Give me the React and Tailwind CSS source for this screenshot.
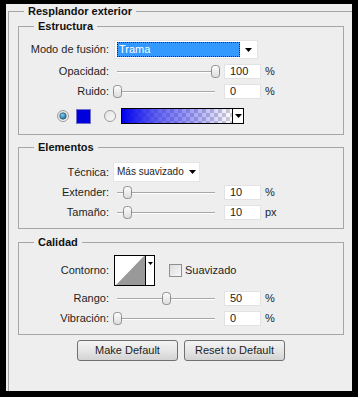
import React from "react";

const font = { fontFamily: '"Liberation Sans", Arial, sans-serif' };

function Thumb() {
    return (
        <svg width="9" height="13" viewBox="0 0 9 13">
            <defs>
                <linearGradient id="th" x1="0" y1="0" x2="0" y2="1">
                    <stop offset="0" stopColor="#fdfdfd" />
                    <stop offset="1" stopColor="#dcdcdc" />
                </linearGradient>
            </defs>
            <rect x="0.5" y="0.5" width="8" height="12" rx="3" fill="url(#th)" stroke="#8d8d8d" />
        </svg>
    );
}

function SliderRow({ label, value, unit }) {
    return (
        <div className="flex items-center h-[15px]">
            <div className="w-[90px] text-right text-[11px] text-[#1e1e1e] leading-none">{label}</div>
            <div className="relative w-[112px] h-[15px]">
                <div className="absolute left-[8px] w-[98px] top-[7px] h-[2px] border-t border-[#a8a8a8] border-b border-b-white"></div>
                <div className="absolute top-[1px]" style={{ left: 4 + value * 0.98 }}>
                    <Thumb />
                </div>
            </div>
            <div className="ml-[3px] w-[37px] h-[15px] bg-white border border-[#e2e2e2] text-[11px] leading-[13px] pl-[5px] text-[#222]">
                {value}
            </div>
            <div className="ml-[4px] text-[11px] text-[#1e1e1e] leading-none">{unit}</div>
        </div>
    );
}

function Arrow() {
    return (
        <svg width="7" height="4" viewBox="0 0 7 4" className="shrink-0">
            <path d="M0 0 H7 L3.5 4 Z" fill="#000" />
        </svg>
    );
}

function Radio({ checked }) {
    return (
        <svg width="12" height="12" viewBox="0 0 12 12">
            <defs>
                <radialGradient id="rb" cx="0.4" cy="0.35" r="0.7">
                    <stop offset="0" stopColor="#7fd4f2" />
                    <stop offset="1" stopColor="#1b5f88" />
                </radialGradient>
                <linearGradient id="rw" x1="0" y1="0" x2="1" y2="1">
                    <stop offset="0" stopColor="#e2e2e2" />
                    <stop offset="1" stopColor="#fbfbfb" />
                </linearGradient>
            </defs>
            <circle cx="6" cy="6" r="5.5" fill="url(#rw)" stroke="#9a9a9a" />
            {checked && <circle cx="6" cy="6" r="3.3" fill="url(#rb)" stroke="#2d4f66" strokeWidth="0.6" />}
        </svg>
    );
}

function GradientPicker() {
    return (
        <div className="flex w-[123px] h-[16px] border border-black bg-white">
            <svg width="110" height="14" viewBox="0 0 110 14" className="block">
                <defs>
                    <pattern id="chk" width="8" height="8" patternUnits="userSpaceOnUse">
                        <rect width="8" height="8" fill="#fff" />
                        <rect width="4" height="4" fill="#cfcfcf" />
                        <rect x="4" y="4" width="4" height="4" fill="#cfcfcf" />
                    </pattern>
                    <linearGradient id="gb" x1="0" y1="0" x2="1" y2="0">
                        <stop offset="0" stopColor="#0000ee" stopOpacity="1" />
                        <stop offset="0.35" stopColor="#2a2aee" stopOpacity="0.7" />
                        <stop offset="1" stopColor="#0000ee" stopOpacity="0" />
                    </linearGradient>
                </defs>
                <rect width="110" height="14" fill="url(#chk)" />
                <rect width="110" height="14" fill="url(#gb)" />
            </svg>
            <div className="flex-1 border-l border-black flex items-center justify-center">
                <Arrow />
            </div>
        </div>
    );
}

function Group({ title, children, className }) {
    return (
        <fieldset className={`ml-[9px] w-[326px] border border-[#a6a6a6] ${className}`}>
            <legend className="ml-[15px] px-[4px] text-[11px] font-bold leading-[14px] text-[#111]">{title}</legend>
            {children}
        </fieldset>
    );
}

function Button({ children }) {
    return (
        <button className="w-[101px] h-[21px] rounded-[3px] border border-[#707070] bg-gradient-to-b from-[#f4f4f4] via-[#e6e6e6] to-[#d3d3d3] text-[11px] text-[#1e1e1e] leading-none">
            {children}
        </button>
    );
}

export default function App() {
    return (
        <div className="w-[358px] h-[397px] bg-black pt-[4px] pl-[6px]" style={font}>
            <div className="w-[346px] h-[387px] bg-[#eeeeee] pl-[2px]">
                <fieldset className="border-l border-t border-[#a6a6a6] h-[387px]">
                    <legend className="ml-[15px] px-[4px] text-[11px] font-bold leading-[14px] text-[#111]">
                        Resplandor exterior
                    </legend>
                    <div className="pt-[1px]">
                        <Group title="Estructura" className="pb-[10px]">
                            <div className="flex items-center mt-[7px] h-[19px]">
                                <div className="w-[90px] text-right text-[11px] text-[#1e1e1e] leading-none">Modo de fusión:</div>
                                <div className="ml-[5px] w-[144px] h-[19px] bg-white border border-[#e3e3e3] flex items-center pl-[2px]">
                                    <div className="w-[123px] h-[15px] bg-[#3399ff] border border-dotted border-[#222] text-white text-[11px] leading-[13px] pl-[1px]">
                                        Trama
                                    </div>
                                    <div className="flex-1 flex justify-center">
                                        <Arrow />
                                    </div>
                                </div>
                            </div>
                            <div className="mt-[5px]">
                                <SliderRow label="Opacidad:" value={100} unit="%" />
                            </div>
                            <div className="mt-[5px]">
                                <SliderRow label="Ruido:" value={0} unit="%" />
                            </div>
                            <div className="flex items-center mt-[9px] h-[16px] pl-[38px]">
                                <Radio checked />
                                <div className="ml-[7px] w-[15px] h-[15px] bg-[#0000dd] border border-[#7070c8]"></div>
                                <div className="ml-[13px] flex">
                                    <Radio />
                                </div>
                                <div className="ml-[5px]">
                                    <GradientPicker />
                                </div>
                            </div>
                        </Group>

                        <Group title="Elementos" className="mt-[5px] pb-[8px]">
                            <div className="flex items-center mt-[8px] h-[20px]">
                                <div className="w-[90px] text-right text-[11px] text-[#1e1e1e] leading-none">Técnica:</div>
                                <div className="ml-[4px] w-[87px] h-[20px] bg-white border border-[#e6e6e6] flex items-center pl-[3px] pr-[3px] justify-between">
                                    <span className="text-[10px] text-[#1e1e1e] leading-none whitespace-nowrap">Más suavizado</span>
                                    <Arrow />
                                </div>
                            </div>
                            <div className="mt-[3px]">
                                <SliderRow label="Extender:" value={10} unit="%" />
                            </div>
                            <div className="mt-[5px]">
                                <SliderRow label="Tamaño:" value={10} unit="px" />
                            </div>
                        </Group>

                        <Group title="Calidad" className="mt-[6px] pb-[8px]">
                            <div className="flex items-center mt-[6px] h-[31px]">
                                <div className="w-[90px] text-right text-[11px] text-[#1e1e1e] leading-none">Contorno:</div>
                                <div className="ml-[5px] w-[41px] h-[31px] border border-black bg-white flex">
                                    <svg width="30" height="29" viewBox="0 0 30 29" className="block">
                                        <path d="M1 29 L29 0 L30 0 L30 29 Z" fill="#999999" />
                                    </svg>
                                    <div className="flex-1 border-l border-black flex justify-center pt-[6px]">
                                        <svg width="5" height="3" viewBox="0 0 5 3">
                                            <path d="M0 0 H5 L2.5 3 Z" fill="#000" />
                                        </svg>
                                    </div>
                                </div>
                                <div className="ml-[14px] w-[13px] h-[13px] border border-[#8e8f8f] bg-gradient-to-br from-[#dcdcdc] to-[#f8f8f8]"></div>
                                <span className="ml-[3px] text-[11px] text-[#1e1e1e] leading-none">Suavizado</span>
                            </div>
                            <div className="mt-[5px]">
                                <SliderRow label="Rango:" value={50} unit="%" />
                            </div>
                            <div className="mt-[5px]">
                                <SliderRow label="Vibración:" value={0} unit="%" />
                            </div>
                        </Group>

                        <div className="flex gap-[6px] mt-[5px] pl-[68px]">
                            <Button>Make Default</Button>
                            <Button>Reset to Default</Button>
                        </div>
                    </div>
                </fieldset>
            </div>
        </div>
    );
}
